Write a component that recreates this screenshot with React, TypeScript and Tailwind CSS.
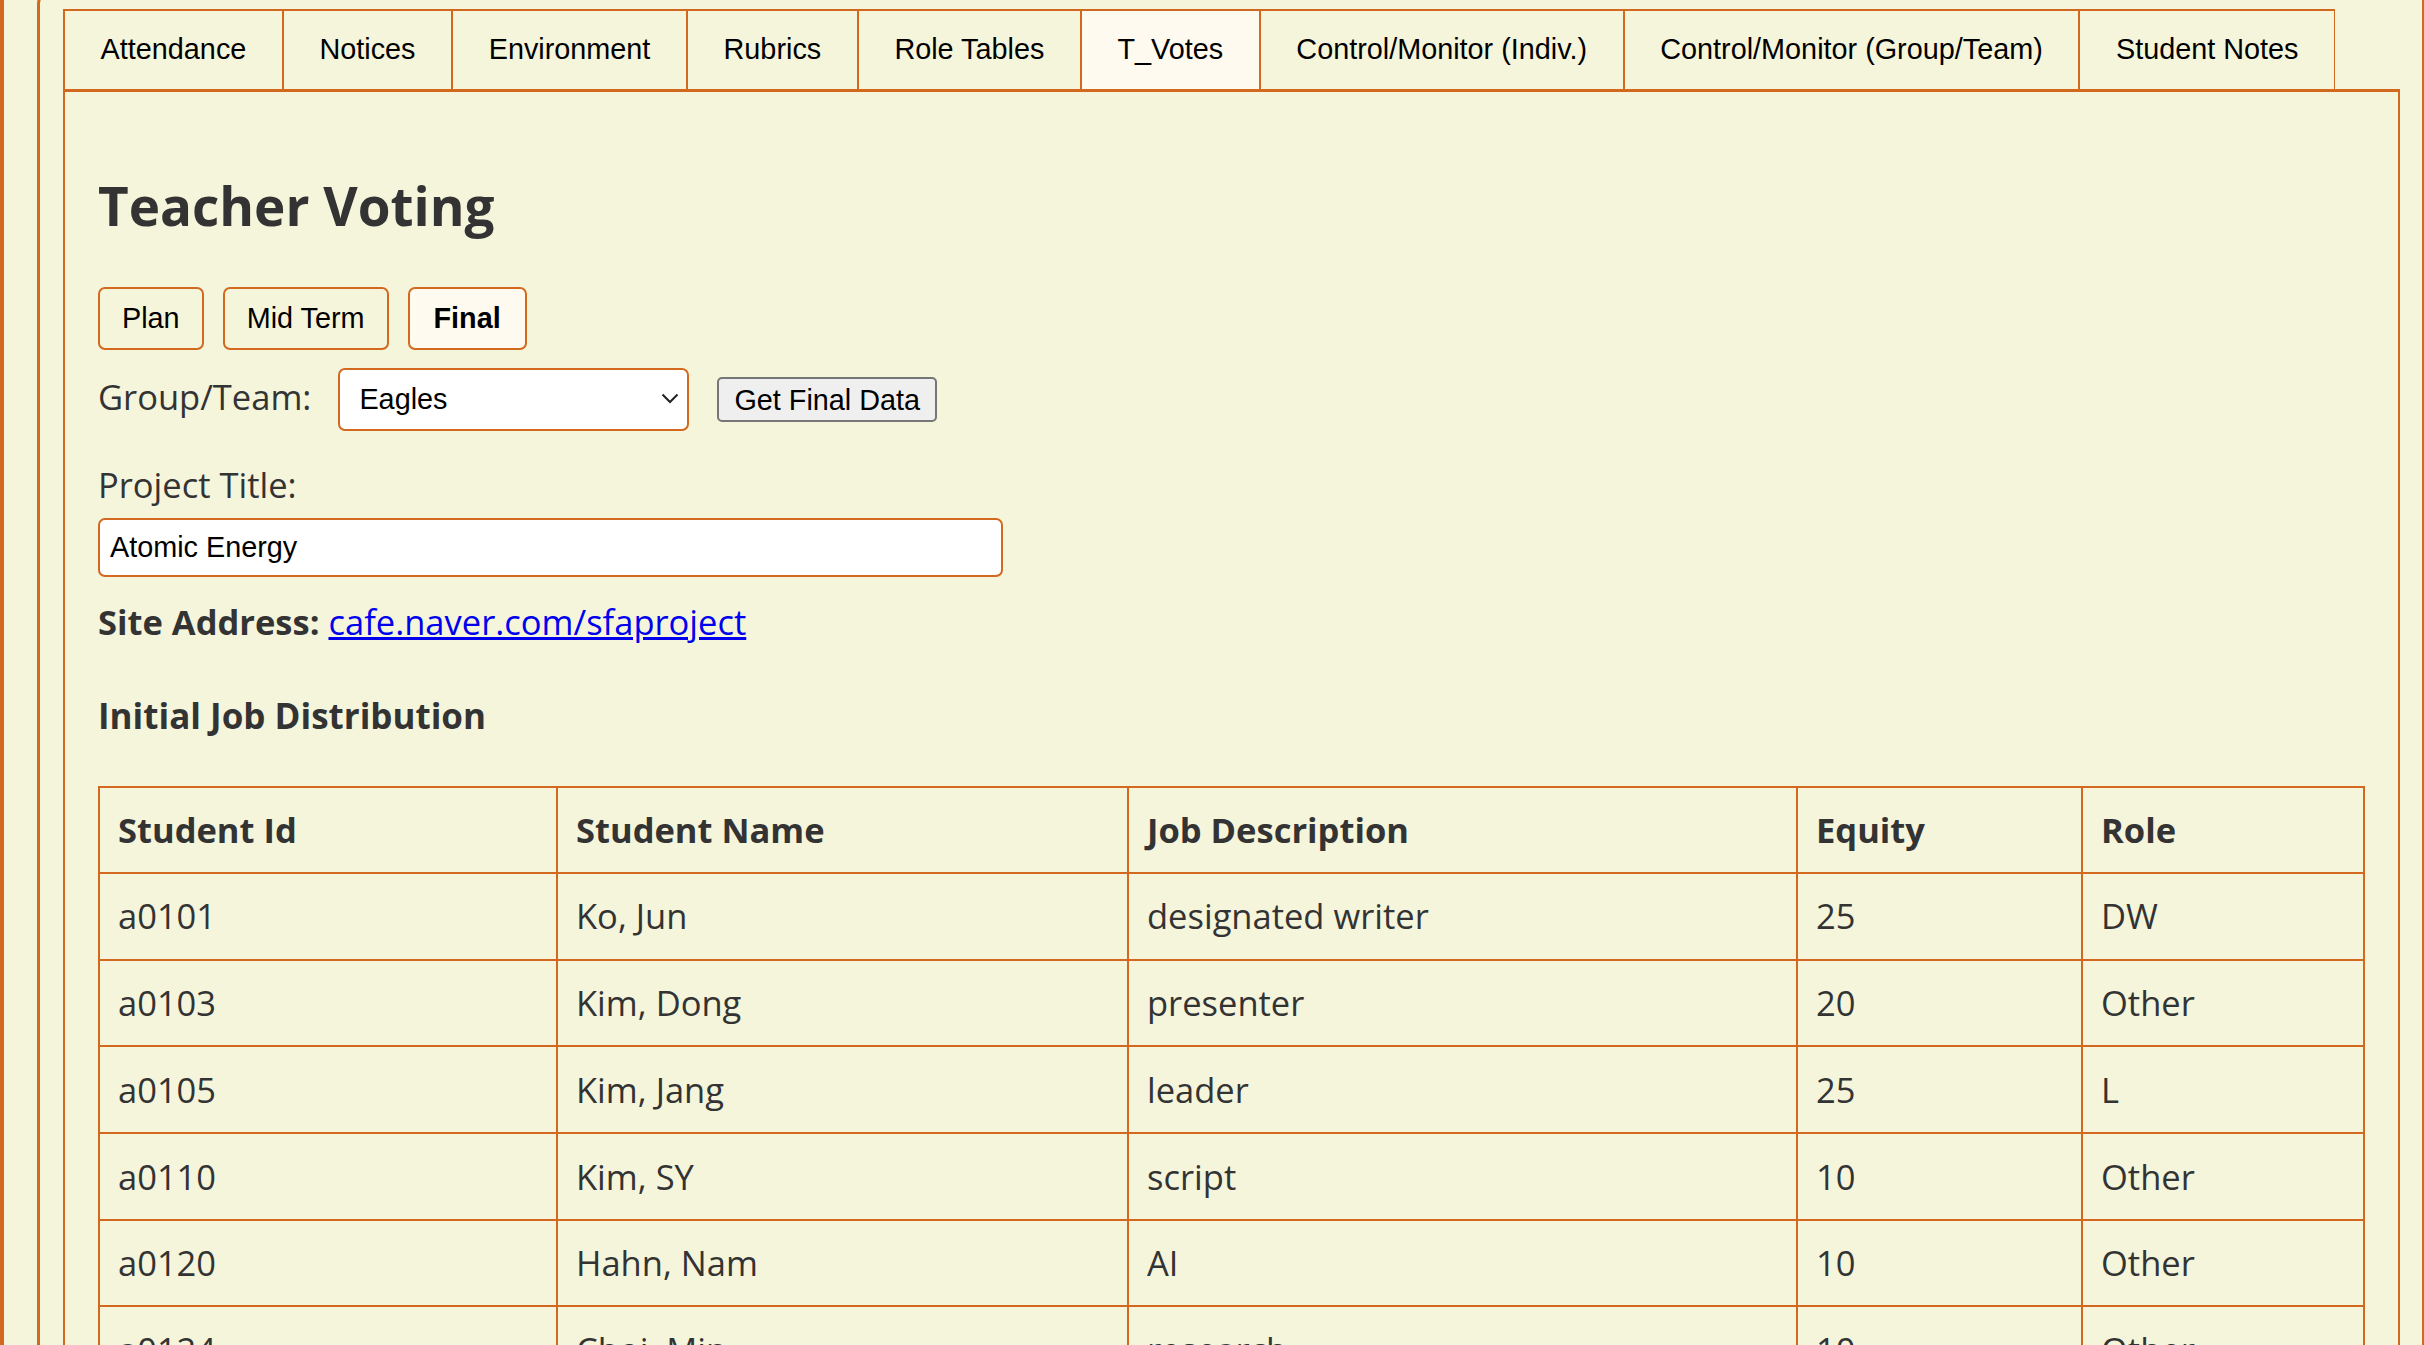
import React from 'react';

const tabs = [
  'Attendance',
  'Notices',
  'Environment',
  'Rubrics',
  'Role Tables',
  'T_Votes',
  'Control/Monitor (Indiv.)',
  'Control/Monitor (Group/Team)',
  'Student Notes',
];

const rows = [
  { id: 'a0101', name: 'Ko, Jun', job: 'designated writer', equity: '25', role: 'DW' },
  { id: 'a0103', name: 'Kim, Dong', job: 'presenter', equity: '20', role: 'Other' },
  { id: 'a0105', name: 'Kim, Jang', job: 'leader', equity: '25', role: 'L' },
  { id: 'a0110', name: 'Kim, SY', job: 'script', equity: '10', role: 'Other' },
  { id: 'a0120', name: 'Hahn, Nam', job: 'AI', equity: '10', role: 'Other' },
  { id: 'a0124', name: 'Choi, Min', job: 'research', equity: '10', role: 'Other' },
];

const comic = "font-['Comic_Sans_MS','Open_Sans',sans-serif]";
const arial = "font-['Liberation_Sans',Arial,sans-serif]";

export default function App() {
  return (
    <div className="h-screen overflow-hidden bg-[#f5f5dc] border-l-4 border-[#d2691e] pl-[33px]">
      <div className="-mt-[10px] h-[1400px] border-t-[3px] border-l-[3px] border-r-[2px] border-[#d2691e] rounded-tl-[14px] pl-[23px] pr-[22px] pt-[16px]">
        {/* tab bar */}
        <div className="flex">
          {tabs.map((t, i) => (
            <button
              key={t}
              className={`${arial} h-[80px] flex items-center px-[35.6px] text-[28.8px] text-black border-t-2 border-l-2 border-[#d2691e] ${
                i === tabs.length - 1 ? 'border-r-[1.5px]' : ''
              } ${t === 'T_Votes' ? 'bg-[#fffaf0]' : 'bg-[#f5f5dc]'}`}
            >
              {t}
            </button>
          ))}
        </div>

        {/* panel */}
        <div className={`${comic} text-[#333] border-t-[3px] border-l-2 border-r-2 border-[#d2691e] px-[33px] h-[1300px]`}>
          <h2 className="mt-[76px] text-[53px] leading-[76px] font-bold">Teacher Voting</h2>

          <div className={`${arial} mt-[43px] flex gap-[19px]`}>
            <button className="h-[63px] px-[22px] text-[28.8px] text-black border-2 border-[#d2691e] rounded-[7px] bg-[#f5f5dc]">Plan</button>
            <button className="h-[63px] px-[22px] text-[28.8px] text-black border-2 border-[#d2691e] rounded-[7px] bg-[#f5f5dc]">Mid Term</button>
            <button className="h-[63px] px-[24px] text-[28.8px] text-black font-bold border-2 border-[#d2691e] rounded-[7px] bg-[#fffaf0]">Final</button>
          </div>

          <div className="mt-[18px] flex items-center">
            <span className="text-[34.5px] leading-[47px] -translate-y-[3px]">Group/Team:</span>
            <div className="relative ml-[27px]">
              <select
                defaultValue="Eagles"
                className={`${arial} appearance-none w-[351px] h-[63px] pl-[19px] text-[28.8px] text-black bg-white border-2 border-[#d2691e] rounded-[7px] outline-none`}
              >
                <option>Eagles</option>
                <option>Hawks</option>
                <option>Owls</option>
              </select>
              <svg className="pointer-events-none absolute right-[10px] top-[25px]" width="18" height="11" viewBox="0 0 18 11">
                <path d="M1.5 1.5 L9 9 L16.5 1.5" fill="none" stroke="#222" strokeWidth="2" />
              </svg>
            </div>
            <button className={`${arial} ml-[28px] h-[45px] px-[15px] text-[28.8px] text-black bg-[#efefef] border-2 border-[#767676] rounded-[5px]`}>
              Get Final Data
            </button>
          </div>

          <div className="mt-[30px] text-[34.5px] leading-[47px]">Project Title:</div>
          <input
            defaultValue="Atomic Energy"
            className={`${arial} mt-[10px] w-[905px] h-[59px] pl-[10px] text-[28.8px] text-black bg-white border-2 border-[#d2691e] rounded-[7px] outline-none`}
          />

          <div className="mt-[21px] text-[34.5px] leading-[47px]">
            <span className="font-bold">Site Address: </span>
            <a href="#" className="text-[#0000ee] underline">cafe.naver.com/sfaproject</a>
          </div>

          <h3 className="mt-[47px] text-[35px] leading-[48px] font-bold">Initial Job Distribution</h3>

          <table className="mt-[46px] w-full table-fixed border-collapse border-2 border-[#d2691e] text-[34.5px]">
            <colgroup>
              <col className="w-[458px]" />
              <col className="w-[571px]" />
              <col className="w-[669px]" />
              <col className="w-[285px]" />
              <col />
            </colgroup>
            <thead>
              <tr className="h-[86px]">
                {['Student Id', 'Student Name', 'Job Description', 'Equity', 'Role'].map(h => (
                  <th key={h} className="border-2 border-[#d2691e] px-[18px] text-left font-bold">
                    {h}
                  </th>
                ))}
              </tr>
            </thead>
            <tbody>
              {rows.map(r => (
                <tr key={r.id} className="h-[86.7px]">
                  <td className="border-2 border-[#d2691e] px-[18px]">{r.id}</td>
                  <td className="border-2 border-[#d2691e] px-[18px]">{r.name}</td>
                  <td className="border-2 border-[#d2691e] px-[18px]">{r.job}</td>
                  <td className="border-2 border-[#d2691e] px-[18px]">{r.equity}</td>
                  <td className="border-2 border-[#d2691e] px-[18px]">{r.role}</td>
                </tr>
              ))}
            </tbody>
          </table>
        </div>
      </div>
    </div>
  );
}
